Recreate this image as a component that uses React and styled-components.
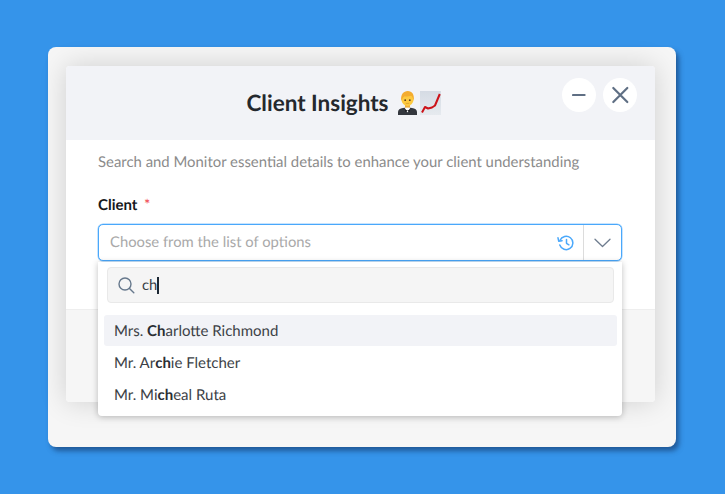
import React from 'react'
import styled, { createGlobalStyle } from 'styled-components'

const GlobalStyle = createGlobalStyle`
  html, body {
    margin: 0;
    padding: 0;
    background: #3594ea;
    font-family: Lato, "Liberation Sans", sans-serif;
    text-rendering: geometricPrecision;
  }
`

const options = [
  { before: 'Mrs. ', match: 'Ch', after: 'arlotte Richmond', active: true },
  { before: 'Mr. Ar', match: 'ch', after: 'ie Fletcher' },
  { before: 'Mr. Mi', match: 'ch', after: 'eal Ruta' },
]

const TuxedoEmoji = () => (
  <svg width="19" height="24" viewBox="0 0 19 24">
    <path d="M0 24v-3c0-2.400 2-3.400 5-4l4.500-.8 4.500.8c3 .6 5 1.600 5 4v3z" fill="#34373e" />
    <path d="M6.500 16.500 9.500 21.500 12.500 16.500 9.500 15.500z" fill="#fff" />
    <path d="M7 18.500 9.500 19.500 12 18.500v2.200L9.500 19.800 7 20.700z" fill="#1b1d22" />
    <rect x="7" y="13" width="5" height="3.600" fill="#efae3a" />
    <ellipse cx="9.500" cy="8.500" rx="6" ry="6.400" fill="#fdc93f" />
    <circle cx="7.200" cy="9.200" r=".9" fill="#5b3a1a" />
    <circle cx="11.800" cy="9.200" r=".9" fill="#5b3a1a" />
    <path d="M7.800 12.400h3.400" stroke="#c98a2c" strokeWidth=".6" />
    <path d="M3.300 10C2.200 3.500 5.600 0 9.800 0c4.200 0 6.900 3.500 5.900 10-.5-2.600-1.300-4.300-2.600-5.200-2.400.8-5.100.8-6.400.4C5.200 6.200 3.900 7.800 3.300 10z" fill="#f4ac2f" />
  </svg>
)

const ChartEmoji = () => (
  <svg width="21" height="24" viewBox="0 0 21 24">
    <defs>
      <linearGradient id="chartPaper" x1="0" y1="0" x2="0" y2="1">
        <stop offset="0" stopColor="#d5dbe4" />
        <stop offset="1" stopColor="#e6eaef" />
      </linearGradient>
    </defs>
    <rect width="21" height="24" fill="url(#chartPaper)" />
    <path d="M2 21.500 5 16 8 17.500 12 16.500 15 14.500 19.800 3" fill="none" stroke="#cc1219" strokeWidth="2" strokeLinejoin="round" />
  </svg>
)

const MinusIcon = () => (
  <svg width="14" height="14" viewBox="0 0 14 14">
    <path d="M1 7h11.600" stroke="#5f6f84" strokeWidth="2.200" strokeLinecap="round" />
  </svg>
)

const CloseIcon = () => (
  <svg width="18" height="18" viewBox="0 0 18 18">
    <path d="M2.300 2l14 14M16.300 2l-14 14" stroke="#5f6f84" strokeWidth="2.200" strokeLinecap="round" />
  </svg>
)

const HistoryIcon = () => (
  <svg width="17" height="16" viewBox="0 0 17 16" fill="none" stroke="#4aa8fb" strokeWidth="1.500" strokeLinecap="round" strokeLinejoin="round">
    <path d="M3 5.300A6.700 6.700 0 1 1 2.800 10" />
    <path d="M1 2.800l.7 3.400 3.400-.5" />
    <path d="M9.500 4.500v3.800l2.400 1.500" />
  </svg>
)

const ChevronIcon = () => (
  <svg width="17" height="10" viewBox="0 0 17 10" fill="none">
    <path d="M1 1.200l7.500 7.300 7.500-7.300" stroke="#6f7d8f" strokeWidth="1.300" strokeLinecap="round" strokeLinejoin="round" />
  </svg>
)

const SearchIcon = () => (
  <svg width="17" height="17" viewBox="0 0 17 17" fill="none" stroke="#66788c" strokeWidth="1.400" strokeLinecap="round">
    <circle cx="7" cy="7" r="6" />
    <path d="M11.500 11.500l4.300 4.300" />
  </svg>
)

export default function App() {
  return (
    <>
      <GlobalStyle />
      <Stage>
        <Backdrop>
          <Modal>
            <Header>
              <Title>
                <TitleText>Client Insights</TitleText>
                <Emojis>
                  <TuxedoEmoji />
                  <ChartEmoji />
                </Emojis>
              </Title>
              <HeaderActions>
                <RoundButton><MinusIcon /></RoundButton>
                <RoundButton><CloseIcon /></RoundButton>
              </HeaderActions>
            </Header>
            <Body>
              <Description>Search and Monitor essential details to enhance your client understanding</Description>
              <Label>Client <Required>*</Required></Label>
              <Field>
                <Select>
                  <Placeholder>Choose from the list of options</Placeholder>
                  <HistoryButton><HistoryIcon /></HistoryButton>
                  <ChevronButton><ChevronIcon /></ChevronButton>
                </Select>
                <Dropdown>
                  <SearchBox>
                    <SearchIcon />
                    <SearchText>ch<Caret /></SearchText>
                  </SearchBox>
                  <OptionList>
                    {options.map(o => (
                      <Option key={o.after} $active={o.active}>
                        {o.before}<strong>{o.match}</strong>{o.after}
                      </Option>
                    ))}
                  </OptionList>
                </Dropdown>
              </Field>
            </Body>
            <Footer />
          </Modal>
        </Backdrop>
      </Stage>
    </>
  )
}

const Stage = styled.div`
  box-sizing: border-box;
  width: 725px;
  height: 494px;
  padding: 47px 49px 47px 48px;
  background: #3594ea;
  overflow: hidden;
`

const Backdrop = styled.div`
  box-sizing: border-box;
  width: 628px;
  height: 400px;
  padding: 19px 21px 45px 18px;
  background: #f6f6f6;
  border-radius: 8px;
  box-shadow: 3px 4px 5px rgba(24, 66, 120, 0.7);
`

const Modal = styled.div`
  display: flex;
  flex-direction: column;
  height: 336px;
  background: #fff;
  border-radius: 4px;
  box-shadow: 0 0 28px rgba(0, 0, 0, 0.16);
`

const Header = styled.div`
  position: relative;
  display: flex;
  align-items: center;
  justify-content: center;
  height: 74px;
  background: #f2f3f7;
  border-radius: 4px 4px 0 0;
`

const Title = styled.h1`
  display: flex;
  align-items: center;
  gap: 9px;
  margin: 0 34px 0 0;
  color: #24282d;
  font-size: 22.5px;
  font-weight: 700;
`

const TitleText = styled.span`
  padding-bottom: 2px;
`

const Emojis = styled.span`
  display: flex;
  align-items: center;
  gap: 3px;
`

const HeaderActions = styled.div`
  position: absolute;
  top: 12px;
  right: 18px;
  display: flex;
  gap: 7px;
`

const RoundButton = styled.div`
  display: flex;
  align-items: center;
  justify-content: center;
  width: 34px;
  height: 34px;
  background: #fff;
  border-radius: 50%;
`

const Body = styled.div`
  flex: 1;
  padding: 13px 33px 0 32px;
`

const Description = styled.p`
  margin: 0;
  color: #8b8b8b;
  font-size: 14.9px;
  line-height: 18px;
`

const Label = styled.div`
  margin-top: 25px;
  color: #15181c;
  font-size: 15px;
  font-weight: 700;
  line-height: 18px;
`

const Required = styled.span`
  margin-left: 3px;
  color: #f0494f;
  font-weight: 400;
`

const Field = styled.div`
  position: relative;
  margin-top: 10px;
`

const Select = styled.div`
  box-sizing: border-box;
  display: flex;
  align-items: center;
  height: 37px;
  padding-left: 11px;
  background: #fff;
  border: 1px solid #4aa8fb;
  border-radius: 5px;
  box-shadow: 0 0 0 0.5px rgba(74, 168, 251, 0.6);
`

const Placeholder = styled.span`
  flex: 1;
  padding-bottom: 1px;
  color: #a9a9a9;
  font-size: 14.8px;
`

const HistoryButton = styled.span`
  display: flex;
  margin-right: 9px;
`

const ChevronButton = styled.span`
  display: flex;
  align-items: center;
  justify-content: center;
  width: 37px;
  height: 100%;
  border-left: 1px solid #dcdcdc;
`

const Dropdown = styled.div`
  position: absolute;
  top: 38px;
  left: 0;
  right: 0;
  box-sizing: border-box;
  height: 154px;
  padding: 5px 5px 0 6px;
  background: #fff;
  border-radius: 0 0 4px 4px;
  box-shadow: 0 1px 6px rgba(0, 0, 0, 0.25);
`

const SearchBox = styled.div`
  box-sizing: border-box;
  display: flex;
  align-items: center;
  gap: 7px;
  height: 36px;
  margin: 0 3px;
  padding-left: 10px;
  background: #f5f5f5;
  border: 1px solid #e9e9e9;
  border-radius: 4px;
`

const SearchText = styled.span`
  display: flex;
  align-items: center;
  color: #3a3f45;
  font-size: 14.8px;
`

const Caret = styled.span`
  display: inline-block;
  width: 2px;
  height: 17px;
  background: #1c2733;
`

const OptionList = styled.div`
  display: flex;
  flex-direction: column;
  gap: 1px;
  margin-top: 12px;
`

const Option = styled.div`
  height: 31px;
  padding-left: 10px;
  color: #3c4146;
  background: ${props => (props.$active ? '#f2f3f7' : 'transparent')};
  border-radius: 3px;
  font-size: 15px;
  line-height: 32px;

  strong {
    color: #2a2e33;
    font-weight: 700;
  }
`

const Footer = styled.div`
  height: 92px;
  background: #f6f6f6;
  border-top: 1px solid #eeeeee;
  border-radius: 0 0 4px 4px;
`
